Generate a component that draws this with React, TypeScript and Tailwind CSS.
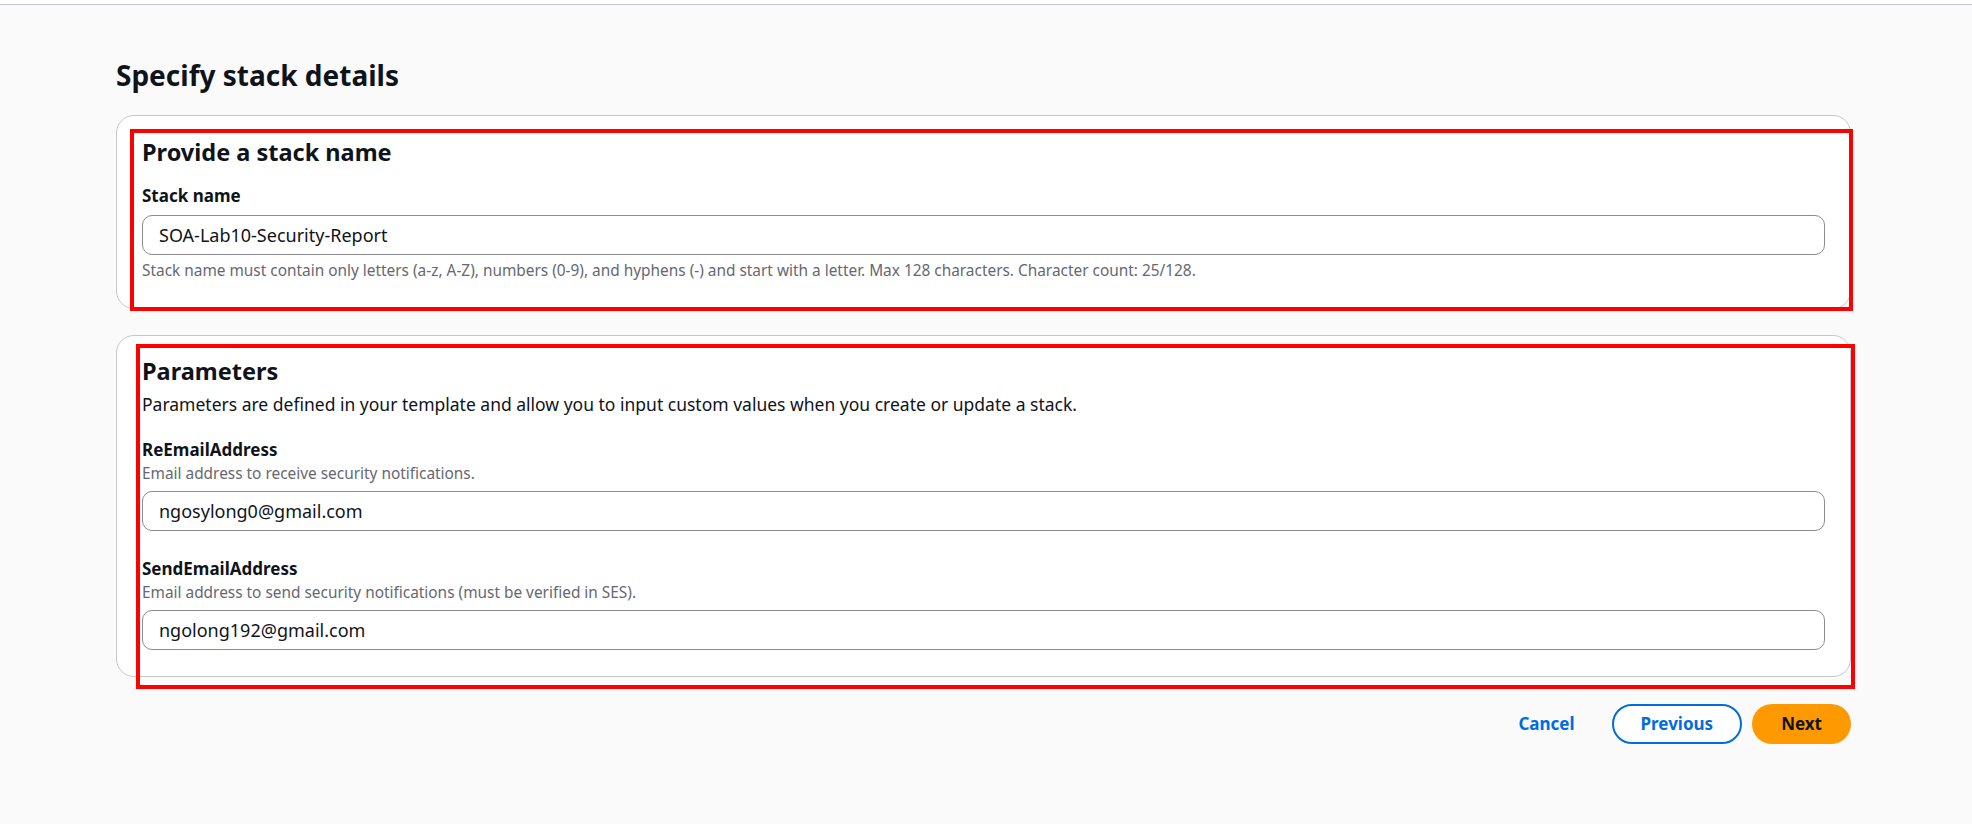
import React from 'react';

const Field: React.FC<{ label: string; description?: string; value: string; helper?: string }> = ({
    label,
    description,
    value,
    helper,
}) => {
    return (
        <div className="flex flex-col">
            <label className="text-[17px] font-bold leading-[22px]">{label}</label>
            {description && (
                <p className="mt-[3px] text-[15.4px] leading-[19px] text-[#656871]">{description}</p>
            )}
            <div className="mt-[8px] flex h-[40px] items-center rounded-[10px] border border-[#8c8c94] bg-white pl-[16px] text-[18px]">
                {value}
            </div>
            {helper && <p className="mt-[6px] text-[15.4px] leading-[19px] text-[#656871]">{helper}</p>}
        </div>
    );
};

const App: React.FC = () => {
    return (
        <div className="min-h-screen bg-[#fafafa] font-['Noto_Sans',sans-serif] text-[#0f141a]">
            {/* top nav edge */}
            <div className="h-[5px] border-b border-[#c6c6cd] bg-white" />

            <main className="pl-[116px] pr-[121px] pt-[52px]">
                <h1 className="text-[28px] font-bold leading-[36px]">Specify stack details</h1>

                {/* Stack name */}
                <section className="relative mt-[22px] rounded-[18px] border border-[#c6c6cd] bg-white px-[25px] pb-[28px] pt-[21px]">
                    <h2 className="text-[23.5px] font-bold leading-[30px]">Provide a stack name</h2>
                    <div className="mt-[18px]">
                        <Field
                            label="Stack name"
                            value="SOA-Lab10-Security-Report"
                            helper="Stack name must contain only letters (a-z, A-Z), numbers (0-9), and hyphens (-) and start with a letter. Max 128 characters. Character count: 25/128."
                        />
                    </div>
                    {/* annotation */}
                    <div className="pointer-events-none absolute bottom-[-3px] left-[13px] right-[-3px] top-[13px] border-4 border-[#ff0000]" />
                </section>

                {/* Parameters */}
                <section className="relative mt-[26px] rounded-[18px] border border-[#c6c6cd] bg-white px-[25px] pb-[26px] pt-[20px]">
                    <h2 className="text-[23.5px] font-bold leading-[30px]">Parameters</h2>
                    <p className="mt-[7px] text-[17.5px] leading-[22px]">
                        Parameters are defined in your template and allow you to input custom values when you create or update a stack.
                    </p>
                    <div className="mt-[24px] flex flex-col gap-[27px]">
                        <Field
                            label="ReEmailAddress"
                            description="Email address to receive security notifications."
                            value="ngosylong0@gmail.com"
                        />
                        <Field
                            label="SendEmailAddress"
                            description="Email address to send security notifications (must be verified in SES)."
                            value="ngolong192@gmail.com"
                        />
                    </div>
                    {/* annotation */}
                    <div className="pointer-events-none absolute bottom-[-13px] left-[19px] right-[-5px] top-[8px] border-4 border-[#ff0000]" />
                </section>

                {/* Actions */}
                <div className="mt-[27px] flex items-center justify-end">
                    <button className="mr-[12px] h-[40px] rounded-full px-[25px] text-[17px] font-bold text-[#006ce0]">Cancel</button>
                    <button className="mr-[10px] h-[40px] rounded-full border-2 border-[#006ce0] bg-white px-[27px] text-[17px] font-bold text-[#006ce0]">
                        Previous
                    </button>
                    <button className="h-[40px] rounded-full bg-[#ff9900] px-[29px] text-[17px] font-bold text-[#0f141a]">
                        Next
                    </button>
                </div>
            </main>
        </div>
    );
};

export default App;
